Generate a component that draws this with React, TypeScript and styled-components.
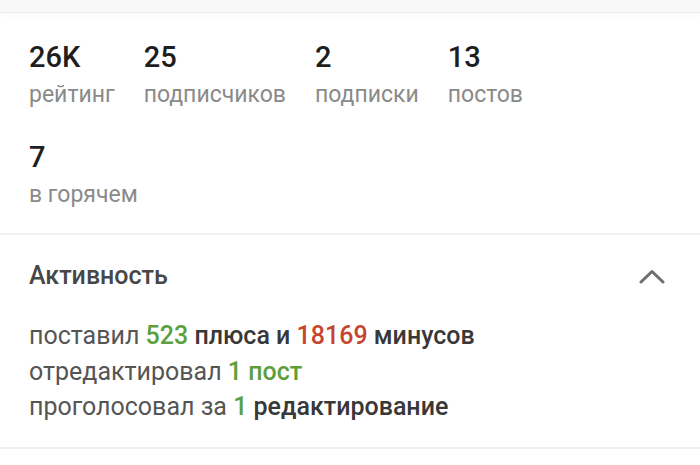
import React from 'react';
import styled, { createGlobalStyle } from 'styled-components';

const GlobalStyle = createGlobalStyle`
  html, body {
    margin: 0;
    padding: 0;
    background: #ffffff;
  }
  body {
    font-family: Roboto, 'Liberation Sans', sans-serif;
    -webkit-font-smoothing: antialiased;
  }
`;

const Page = styled.div`
  width: 700px;
  height: 465px;
  overflow: hidden;
  background: #fff;
`;

// серая полоса сверху (хвост предыдущего блока)
const TopBand = styled.div`
  height: 12px;
  background: #f8f8f8;
  border-bottom: 1px solid #ececec;
  box-shadow: 0 2px 6px rgba(0, 0, 0, 0.03);
`;

const Stats = styled.div`
  display: flex;
  flex-wrap: wrap;
  column-gap: 29px;
  row-gap: 27px;
  padding: 27px 29px 20px;
  border-bottom: 2px solid #f1f1f1;
`;

const StatItem = styled.div<{ $wide?: boolean }>`
  display: flex;
  flex-direction: column;
  flex-basis: ${p => (p.$wide ? '100%' : 'auto')};
`;

const StatValue = styled.span`
  font-size: 29px;
  font-weight: 500;
  line-height: 34px;
  color: #1e1e1e;
`;

const StatLabel = styled.span`
  margin-top: 2px;
  font-size: 23px;
  line-height: 37px;
  color: #8a8a8a;
`;

const Section = styled.div`
  padding: 26px 29px 22px;
  border-bottom: 2px solid #f1f1f1;
`;

const SectionHeader = styled.div`
  display: flex;
  align-items: center;
  justify-content: space-between;
  margin-bottom: 27px;
`;

const SectionTitle = styled.span`
  font-size: 25px;
  font-weight: 500;
  line-height: 30px;
  color: #474747;
`;

const Chevron = styled.button`
  border: 0;
  background: none;
  padding: 0;
  margin-right: 6px;
  display: flex;
  color: #6e6e6e;
`;

const Line = styled.p`
  margin: 0;
  font-size: 25px;
  line-height: 35.5px;
  color: #555;
`;

const Strong = styled.span<{ $tone?: 'plus' | 'minus' }>`
  font-weight: 500;
  color: ${p => (p.$tone === 'plus' ? '#5c9f3c' : p.$tone === 'minus' ? '#c6452f' : '#383838')};
`;

const stats = [
  { value: '26K', label: 'рейтинг' },
  { value: '25', label: 'подписчиков' },
  { value: '2', label: 'подписки' },
  { value: '13', label: 'постов' },
  { value: '7', label: 'в горячем', wide: true },
];

const App = () => (
  <Page>
    <GlobalStyle />
    <TopBand />
    <Stats>
      {stats.map(s => (
        <StatItem key={s.label} $wide={s.wide}>
          <StatValue>{s.value}</StatValue>
          <StatLabel>{s.label}</StatLabel>
        </StatItem>
      ))}
    </Stats>
    <Section>
      <SectionHeader>
        <SectionTitle>Активность</SectionTitle>
        <Chevron type="button" aria-label="Свернуть">
          <svg width="26" height="15" viewBox="0 0 26 15" fill="none">
            <path d="M2 13 L13 2.5 L24 13" stroke="currentColor" strokeWidth="3" strokeLinecap="round" strokeLinejoin="round" />
          </svg>
        </Chevron>
      </SectionHeader>
      <Line>
        поставил <Strong $tone="plus">523</Strong> <Strong>плюса и</Strong>{' '}
        <Strong $tone="minus">18169</Strong> <Strong>минусов</Strong>
      </Line>
      <Line>
        отредактировал <Strong $tone="plus">1 пост</Strong>
      </Line>
      <Line>
        проголосовал за <Strong $tone="plus">1</Strong> <Strong>редактирование</Strong>
      </Line>
    </Section>
  </Page>
);

export default App;
